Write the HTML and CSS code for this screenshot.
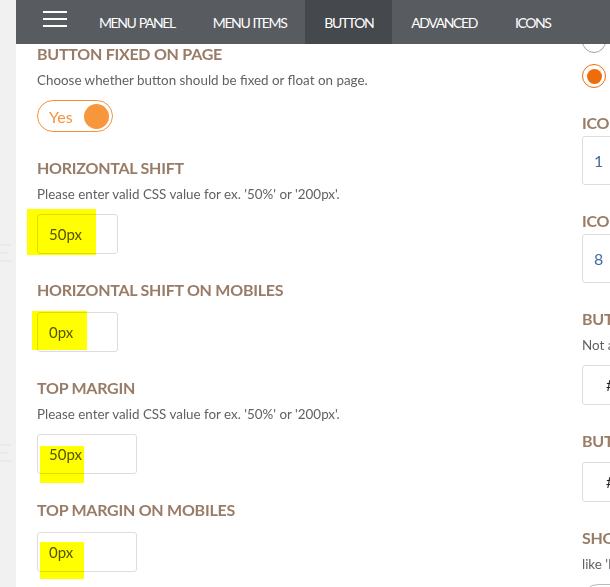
FILE: index.html
```html
<!DOCTYPE html>
<html lang="en">

<head>
    <meta charset="UTF-8" />
    <meta name="viewport" content="width=device-width, initial-scale=1.0" />
    <title>Button settings</title>
    <link rel="stylesheet" href="styles.css">
</head>

<body>
    <div class="page">
        <div class="side">
            <span class="ghost"><i></i><i></i><i></i></span>
            <span class="ghost"><i></i><i></i><i></i></span>
        </div>
        <div class="main">
            <ul class="nav">
                <li class="nav-burger"><span></span><span></span><span></span></li>
                <li>Menu Panel</li>
                <li>Menu Items</li>
                <li class="current">Button</li>
                <li>Advanced</li>
                <li>Icons</li>
            </ul>
            <div class="cols">
                <div class="col">
                    <div class="opt">
                        <h3 class="opt-title">Button fixed on page</h3>
                        <p class="opt-desc">Choose whether button should be fixed or float on page.</p>
                        <label class="switch"><span>Yes</span><i class="knob"></i></label>
                    </div>
                    <div class="opt">
                        <h3 class="opt-title">Horizontal shift</h3>
                        <p class="opt-desc">Please enter valid CSS value for ex. '50%' or '200px'.</p>
                        <div class="field">
                            <input class="field-input" type="text" value="50px" readonly>
                            <span class="mark mark-1"></span>
                        </div>
                    </div>
                    <div class="opt">
                        <h3 class="opt-title">Horizontal shift on mobiles</h3>
                        <div class="field">
                            <input class="field-input" type="text" value="0px" readonly>
                            <span class="mark mark-2"></span>
                        </div>
                    </div>
                    <div class="opt">
                        <h3 class="opt-title">Top margin</h3>
                        <p class="opt-desc">Please enter valid CSS value for ex. '50%' or '200px'.</p>
                        <div class="field">
                            <input class="field-input wide" type="text" value="50px" readonly>
                            <span class="mark mark-3"></span>
                        </div>
                    </div>
                    <div class="opt">
                        <h3 class="opt-title">Top margin on mobiles</h3>
                        <div class="field">
                            <input class="field-input wide" type="text" value="0px" readonly>
                            <span class="mark mark-4"></span>
                        </div>
                    </div>
                </div>
                <div class="col col-right">
                    <span class="radio"></span>
                    <span class="radio on"></span>
                    <div class="opt opt-num">
                        <h3 class="opt-title">Icon size</h3>
                        <div class="field">
                            <input class="field-input num" type="text" value="1" readonly>
                        </div>
                    </div>
                    <div class="opt opt-num">
                        <h3 class="opt-title">Icon offset</h3>
                        <div class="field">
                            <input class="field-input num" type="text" value="8" readonly>
                        </div>
                    </div>
                    <div class="opt">
                        <h3 class="opt-title">Button color</h3>
                        <p class="opt-desc">Not applicable for image buttons.</p>
                        <div class="field">
                            <input class="field-input color" type="text" value="#f7913a" readonly>
                        </div>
                    </div>
                    <div class="opt">
                        <h3 class="opt-title">Button hover color</h3>
                        <div class="field">
                            <input class="field-input color" type="text" value="#f27c16" readonly>
                        </div>
                    </div>
                    <div class="opt">
                        <h3 class="opt-title">Show label</h3>
                        <p class="opt-desc">like 'Menu' next to the button.</p>
                        <label class="switch off"><span>No</span><i class="knob"></i></label>
                    </div>
                </div>
            </div>
        </div>
    </div>
</body>

</html>
```

FILE: styles.css
```css
* {
    margin: 0;
    padding: 0;
}

body {
    overflow: hidden;
    background-color: #fff;
    font-family: Lato, "Open Sans", sans-serif;
}

.page {
    display: flex;
    min-height: 100vh;
}

/* grey strip on the left */
.side {
    flex: none;
    width: 16px;
    background-color: #f1f1f1;
    display: flex;
    flex-direction: column;
    gap: 182px;
    padding-top: 244px;
}

.ghost {
    display: flex;
    flex-direction: column;
    gap: 6px;
}

.ghost i {
    display: block;
    width: 11px;
    height: 2px;
    border-radius: 0 2px 2px 0;
    background-color: #e9e9e9;
}

.ghost i:nth-child(2) {
    width: 9px;
}

.ghost i:nth-child(3) {
    width: 12px;
}

.main {
    flex: 1;
    min-width: 0;
}

/* top tabs */
.nav {
    position: relative;
    z-index: 2;
    display: flex;
    height: 44px;
    list-style-type: none;
    background-color: #585b5f;
    color: #fff;
    font-size: 14px;
    letter-spacing: -1.4px;
    word-spacing: 1px;
    text-transform: uppercase;
    white-space: nowrap;
}

.nav li {
    display: flex;
    align-items: center;
    padding: 0 19px;
}

.nav li.current {
    background-color: #45484c;
}

.nav .nav-burger {
    box-sizing: border-box;
    width: 64px;
    padding: 11px 0 0 27px;
    flex-direction: column;
    align-items: flex-start;
    gap: 5px;
}

.nav-burger span {
    display: block;
    width: 24px;
    height: 2px;
    background-color: #fff;
}

.cols {
    display: grid;
    grid-template-columns: 525px 1fr;
    column-gap: 20px;
    padding-left: 21px;
}

.opt {
    margin-bottom: 26px;
}

.opt-title {
    margin-bottom: 6px;
    font-size: 16px;
    line-height: 20px;
    font-weight: bold;
    letter-spacing: -0.25px;
    color: #987c67;
    text-transform: uppercase;
    white-space: nowrap;
}

.opt-desc {
    margin-bottom: 10px;
    font-size: 13.4px;
    line-height: 20px;
    color: #5f6166;
    white-space: nowrap;
}

.opt-title + .field {
    margin-top: 12px;
}

.field {
    position: relative;
}

.field-input {
    display: block;
    box-sizing: border-box;
    width: 81px;
    height: 40px;
    padding: 0 11px;
    border: 1px solid #ddd;
    border-radius: 3px;
    background-color: #fff;
    font-family: Lato, sans-serif;
    font-size: 15px;
    color: #555;
    outline: none;
}

.field-input.wide {
    width: 100px;
}

/* yellow highlighter over the values */
.mark {
    position: absolute;
    background-color: #ffff00;
    mix-blend-mode: multiply;
}

.mark-1 {
    left: -10px;
    top: -5px;
    width: 69px;
    height: 46px;
}

.mark-2 {
    left: -5px;
    top: -1px;
    width: 55px;
    height: 39px;
}

.mark-3 {
    left: 3px;
    top: 12px;
    width: 44px;
    height: 37px;
}

.mark-4 {
    left: 3px;
    top: 10px;
    width: 44px;
    height: 37px;
}

.switch {
    box-sizing: border-box;
    display: flex;
    align-items: center;
    justify-content: space-between;
    width: 76px;
    height: 32px;
    padding: 0 3px 0 11px;
    border: 1px solid #f7923b;
    border-radius: 16px;
    font-size: 16px;
    color: #f7923b;
}

.knob {
    width: 25px;
    height: 25px;
    border-radius: 50%;
    background-color: #f7963c;
}

.switch.off {
    border-color: #bbb;
    color: #999;
}

.switch.off .knob {
    background-color: #ccc;
}

/* right column */
.col-right {
    margin-top: -15px;
}

.radio {
    box-sizing: border-box;
    display: grid;
    place-items: center;
    width: 24px;
    height: 24px;
    border: 1px solid #9ea3a8;
    border-radius: 50%;
}

.radio.on {
    margin-top: 11px;
    margin-bottom: 25px;
    border-color: #ef6c0a;
}

.radio.on::after {
    content: "";
    width: 15px;
    height: 15px;
    border-radius: 50%;
    background-color: #ef6c0a;
}

.opt-num .opt-title {
    margin-bottom: 3px;
}

.col-right .opt-num .opt-title + .field {
    margin-top: 0;
}

.col-right .opt-title + .field {
    margin-top: 11px;
}

.field-input.num {
    width: 100px;
    height: 49px;
    font-size: 16px;
    color: #416aa6;
}

.field-input.color {
    width: 100px;
    padding-left: 23px;
    color: #222;
}
```
